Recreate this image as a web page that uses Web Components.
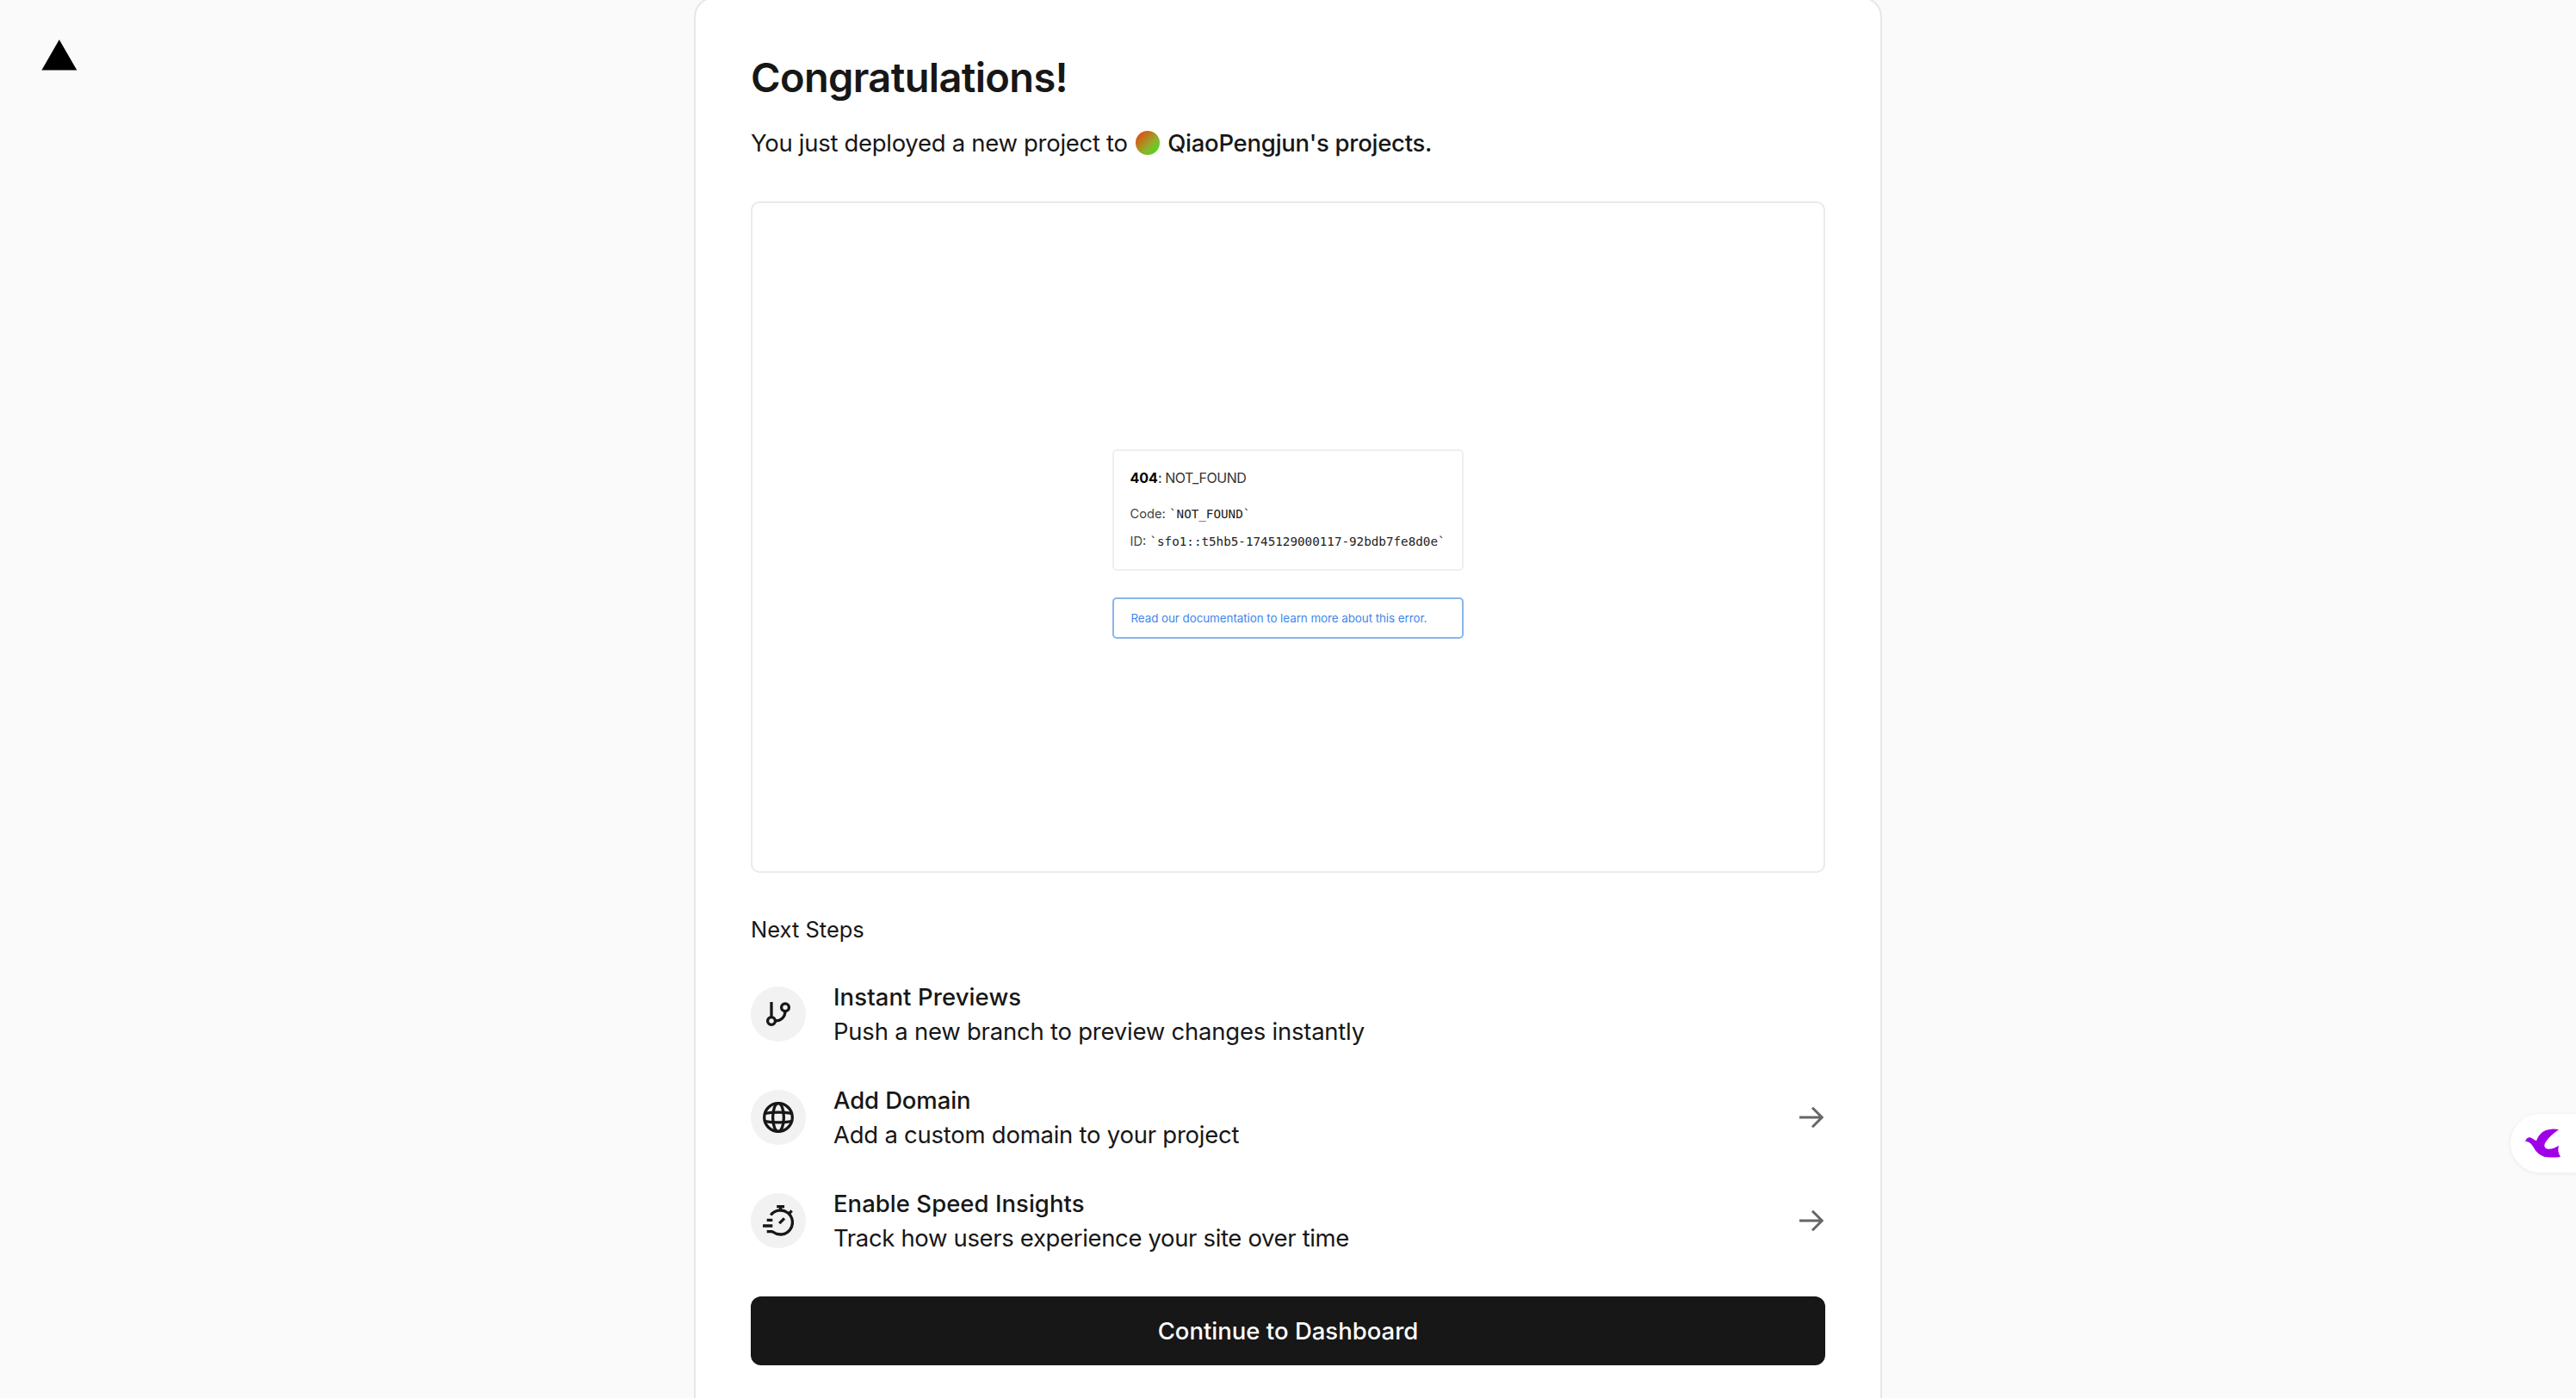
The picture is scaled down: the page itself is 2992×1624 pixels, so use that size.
<!DOCTYPE html>
<html lang="en">
<head>
<meta charset="utf-8">
<title>Congratulations!</title>
<style>
  body {
    margin: 0;
    height: 100vh;
    overflow: hidden;
    background: #fafafa;
    color: #171717;
    font-family: Inter, "Liberation Sans", sans-serif;
    font-size: 27.5px;
    line-height: 40px;
  }
</style>
</head>
<body>
<deploy-page>
  <vercel-logo slot="logo"></vercel-logo>
  <deploy-card card-title="Congratulations!">
    <team-line slot="intro" team="QiaoPengjun's projects.">You just deployed a new project to</team-line>
    <site-preview slot="preview">
      <error-box code="NOT_FOUND" error-id="sfo1::t5hb5-1745129000117-92bdb7fe8d0e"></error-box>
      <doc-note>Read our documentation to learn more about this error.</doc-note>
    </site-preview>
    <next-step icon="branch" style="--title-ls:.1px;--desc-ls:-.23px">
      <span slot="title">Instant Previews</span>
      Push a new branch to preview changes instantly
    </next-step>
    <next-step icon="globe" style="--title-ls:-.12px;--desc-ls:-.25px" arrow>
      <span slot="title">Add Domain</span>
      Add a custom domain to your project
    </next-step>
    <next-step icon="stopwatch" style="--title-ls:.03px;--desc-ls:-.35px" arrow>
      <span slot="title">Enable Speed Insights</span>
      Track how users experience your site over time
    </next-step>
    <primary-button slot="action">Continue to Dashboard</primary-button>
  </deploy-card>
</deploy-page>
<side-widget></side-widget>

<script>
  class DeployPage extends HTMLElement {
    constructor() {
      super();
      this.attachShadow({ mode: "open" });
      /*html*/
      this.shadowRoot.innerHTML = `
        <style>
        :host{
            display:grid;
            grid-template-columns:1fr 1380px 1fr;
            height:100vh;
            align-items:start;
        }
        header{
            padding:46px 48px;
        }
        </style>
        <header><slot name="logo"></slot></header>
        <main><slot></slot></main>
      `;
    }
  }
  customElements.define('deploy-page', DeployPage);

  class VercelLogo extends HTMLElement {
    constructor() {
      super();
      this.attachShadow({ mode: "open" });
      this.shadowRoot.innerHTML = `
        <style>
        :host{ display:block; }
        svg{ display:block; }
        </style>
        <svg width="42" height="36" viewBox="0 0 42 36"><path d="M20.8 0L41.3 35.5H.4z" fill="#000"/></svg>
      `;
    }
  }
  customElements.define('vercel-logo', VercelLogo);

  class DeployCard extends HTMLElement {
    constructor() {
      super();
      this.attachShadow({ mode: "open" });
      /*html*/
      this.shadowRoot.innerHTML = `
        <style>
        :host{
            display:block;
            box-sizing:border-box;
            margin-top:-4px;
            padding:64px;
            border:2px solid #e6e6e6;
            border-radius:24px;
            background:#fff;
        }
        h1{
            margin:0 0 28px;
            font-size:47px;
            font-weight:600;
            line-height:56px;
            letter-spacing:-.65px;
        }
        h2{
            margin:46px 0 38px;
            font-size:25.5px;
            font-weight:400;
            line-height:40px;
            letter-spacing:0;
        }
        .steps{
            display:flex;
            flex-direction:column;
            gap:40px;
            margin-bottom:48px;
        }
        </style>
        <h1 id="title"></h1>
        <slot name="intro"></slot>
        <slot name="preview"></slot>
        <h2>Next Steps</h2>
        <div class="steps"><slot></slot></div>
        <slot name="action"></slot>
      `;
      this.cardTitle = this.shadowRoot.querySelector("#title");
    }
    static get observedAttributes() {
      return ['card-title'];
    }
    attributeChangedCallback(attrName, oldVal, newVal) {
      this.cardTitle.textContent = newVal;
    }
  }
  customElements.define('deploy-card', DeployCard);

  class TeamLine extends HTMLElement {
    constructor() {
      super();
      this.attachShadow({ mode: "open" });
      /*html*/
      this.shadowRoot.innerHTML = `
        <style>
        :host{
            display:flex;
            align-items:center;
            margin-bottom:48px;
            letter-spacing:-.3px;
            white-space:nowrap;
        }
        .avatar{
            width:28px;
            height:28px;
            margin:0 9px 0 9.5px;
            border-radius:50%;
            background:linear-gradient(135deg,#f0400c 5%,#8fb02c 60%,#38e81c 100%);
        }
        b{
            font-weight:500;
            letter-spacing:-.26px;
        }
        </style>
        <span><slot></slot></span>
        <span class="avatar"></span>
        <b id="team"></b>
      `;
      this.team = this.shadowRoot.querySelector("#team");
    }
    static get observedAttributes() {
      return ['team'];
    }
    attributeChangedCallback(attrName, oldVal, newVal) {
      this.team.textContent = newVal;
    }
  }
  customElements.define('team-line', TeamLine);

  class SitePreview extends HTMLElement {
    constructor() {
      super();
      this.attachShadow({ mode: "open" });
      /*html*/
      this.shadowRoot.innerHTML = `
        <style>
        :host{
            display:flex;
            flex-direction:column;
            align-items:center;
            gap:31px;
            box-sizing:border-box;
            height:780px;
            padding-top:286px;
            border:2px solid #eaeaea;
            border-radius:10px;
        }
        </style>
        <slot></slot>
      `;
    }
  }
  customElements.define('site-preview', SitePreview);

  class ErrorBox extends HTMLElement {
    constructor() {
      super();
      this.attachShadow({ mode: "open" });
      /*html*/
      this.shadowRoot.innerHTML = `
        <style>
        :host{
            display:block;
            box-sizing:border-box;
            width:408px;
            height:141px;
            padding:15px 18.5px;
            border:2px solid #efefef;
            border-radius:5px;
            font-size:14.7px;
            line-height:32px;
            color:#444;
            white-space:nowrap;
        }
        p{
            margin:0;
        }
        .head{
            margin-bottom:10px;
            font-size:16px;
            letter-spacing:-.45px;
            color:#333;
        }
        b{
            color:#000;
            letter-spacing:0;
        }
        code{
            font:14.25px/1 "DejaVu Sans Mono", monospace;
            color:#222;
        }
        </style>
        <p class="head"><b>404</b>: <span id="name"></span></p>
        <p>Code: <code id="code"></code></p>
        <p>ID: <code id="error"></code></p>
      `;
    }
    connectedCallback() {
      const root = this.shadowRoot;
      const code = this.getAttribute('code');
      root.querySelector("#name").textContent = code;
      root.querySelector("#code").textContent = '`' + code + '`';
      root.querySelector("#error").textContent = '`' + this.getAttribute('error-id') + '`';
    }
  }
  customElements.define('error-box', ErrorBox);

  class DocNote extends HTMLElement {
    constructor() {
      super();
      this.attachShadow({ mode: "open" });
      this.shadowRoot.innerHTML = `
        <style>
        :host{
            display:block;
            box-sizing:border-box;
            width:408px;
            height:48px;
            padding-left:19.5px;
            border:2px solid #8ab4ec;
            border-radius:5px;
            font-size:13.4px;
            line-height:45px;
            letter-spacing:-.06px;
            color:#3f87ea;
            white-space:nowrap;
        }
        </style>
        <slot></slot>
      `;
    }
  }
  customElements.define('doc-note', DocNote);

  const icons = {
    branch: `
      <path d="M10 4v18"/>
      <circle cx="10" cy="26" r="4.4"/>
      <circle cx="26" cy="10.2" r="4.4"/>
      <path d="M14.5 26c6.5 0 11.5-4.5 11.5-11.5"/>`,
    globe: `
      <circle cx="18" cy="18" r="16.3"/>
      <ellipse cx="18" cy="18" rx="6.4" ry="16.3"/>
      <path d="M2.5 13.4C11 11.9 25 11.9 33.5 13.4M2.5 22.6C11 24.1 25 24.1 33.5 22.6"/>`,
    stopwatch: `
      <path d="M9.2 11.6A14 14 0 1 1 12 31.2L10.5 30.7H4.7"/>
      <path d="M16.2 1.6h8.9M20.6 1.6v4.6M30 10.2l3.7-3.7M19.2 21.2l5.8-5.8M4.7 17.3h6.6M0 24h11.3"/>`
  };

  class NextStep extends HTMLElement {
    constructor() {
      super();
      this.attachShadow({ mode: "open" });
      /*html*/
      this.shadowRoot.innerHTML = `
        <style>
        :host{
            display:flex;
            align-items:center;
            gap:32px;
            height:80px;
        }
        .icon{
            display:flex;
            align-items:center;
            justify-content:center;
            width:64px;
            height:64px;
            border-radius:50%;
            background:#f2f2f2;
        }
        .text{
            flex:1;
        }
        .title{
            font-weight:500;
            letter-spacing:var(--title-ls);
        }
        .desc{
            letter-spacing:var(--desc-ls);
        }
        .arrow{
            display:none;
        }
        :host([arrow]) .arrow{
            display:block;
        }
        </style>
        <div class="icon">
            <svg id="icon" width="36" height="36" viewBox="0 0 36 36" fill="none" stroke="#171717" stroke-width="3.3"></svg>
        </div>
        <div class="text">
            <div class="title"><slot name="title"></slot></div>
            <div class="desc"><slot></slot></div>
        </div>
        <svg class="arrow" width="32" height="32" viewBox="0 0 32 32" fill="none" stroke="#666" stroke-width="3">
            <path d="M2 16h26M17 4.8L28.2 16L17 27.2"/>
        </svg>
      `;
    }
    connectedCallback() {
      this.shadowRoot.querySelector("#icon").innerHTML = icons[this.getAttribute('icon')];
    }
  }
  customElements.define('next-step', NextStep);

  class PrimaryButton extends HTMLElement {
    constructor() {
      super();
      this.attachShadow({ mode: "open" });
      /*html*/
      this.shadowRoot.innerHTML = `
        <style>
        :host{
            display:block;
        }
        button{
            display:block;
            width:100%;
            height:80px;
            padding:0;
            border:none;
            border-radius:12px;
            background:#171717;
            color:#fff;
            font:inherit;
            font-weight:500;
            cursor:pointer;
        }
        </style>
        <button><slot></slot></button>
      `;
    }
  }
  customElements.define('primary-button', PrimaryButton);

  // Launcher that sticks to the right edge of the window
  class SideWidget extends HTMLElement {
    constructor() {
      super();
      this.attachShadow({ mode: "open" });
      /*html*/
      this.shadowRoot.innerHTML = `
        <style>
        :host{
            position:absolute;
            top:1294px;
            right:0;
            display:flex;
            align-items:center;
            box-sizing:border-box;
            width:76px;
            height:68px;
            padding-left:10px;
            border-radius:34px 0 0 34px;
            background:#fff;
            box-shadow:0 1px 4px 1px rgba(0,0,0,.05);
        }
        </style>
        <svg width="56" height="48" viewBox="0 0 168 144">
            <path fill="#a000e8" d="M21 65C26 54 33 50 41 53C48 55 53 61 60 64C67 42 84 24 112 23C122 22 131 23 138 25C120 37 102 52 91 70C86 80 87 89 98 92C112 94 126 88 138 80C134 93 136 107 144 119C131 122 113 122 99 121C74 118 60 104 50 86C43 74 35 66 21 65z"/>
        </svg>
      `;
    }
  }
  customElements.define('side-widget', SideWidget);
</script>
</body>
</html>
